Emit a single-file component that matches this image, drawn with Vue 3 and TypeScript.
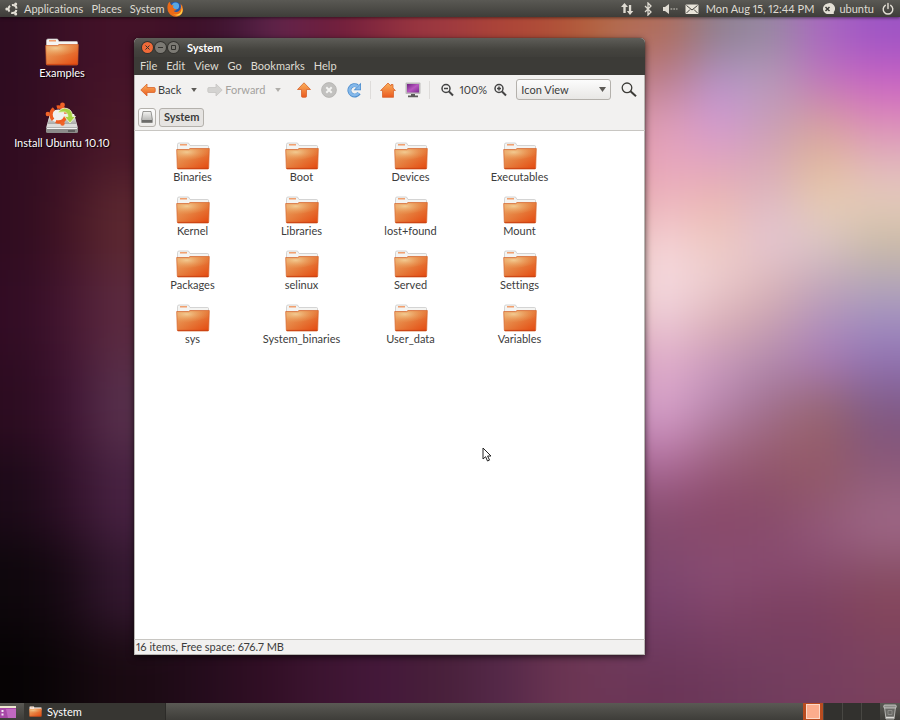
<script setup lang="ts">
import { ref } from 'vue'

interface Patch { x: number; y: number; w: number; h: number; fill: string }

const folders: string[] = [
  'Binaries', 'Boot', 'Devices', 'Executables',
  'Kernel', 'Libraries', 'lost+found', 'Mount',
  'Packages', 'selinux', 'Served', 'Settings',
  'sys', 'System_binaries', 'User_data', 'Variables',
]
const windowMenus: string[] = ['File', 'Edit', 'View', 'Go', 'Bookmarks', 'Help']
const panelMenus: string[] = ['Applications', 'Places', 'System']
const workspaces = [1, 2, 3, 4]
const view = ref('Icon View')
const activeWorkspace = ref(1)

// Wallpaper: colour patches that are blurred together into soft light.
function mesh(xs: number[], ys: number[], rows: string[]): Patch[] {
  return rows.flatMap((row, r) =>
    row.split(' ').map((hex, c) => ({
      x: xs[c], y: ys[r], w: xs[c + 1] - xs[c] + 1, h: ys[r + 1] - ys[r] + 1, fill: '#' + hex,
    })),
  )
}

const wallpaper: Patch[] = [
  ...mesh([100, 170, 220, 260, 300, 350, 400, 470, 530, 580, 640], [-90, 340], [
    '3e1028 3c1028 441838 662850 6a1c3c 84283e 9c3840 ac4438 b05038 b46840',
  ]),
  ...mesh([100, 170, 230, 290, 350, 410, 470, 530, 590, 650], [340, 810], [
    '140810 240c1c 300e24 3c1430 44183a 48203a 542848 6a3452 703a58',
  ]),
  ...mesh([-90, 45, 90, 170], [-90, 90, 180, 270, 360, 450, 540, 630, 810], [
    '2e0c20 3c1026 441228',
    '300c20 3c1024 4a1828',
    '300c20 421424 5c2830',
    '320c24 441630 5c2a40',
    '2c0c20 3c1230 58304c',
    '1c0a18 301028 482242',
    '0e070c 180914 341830',
    '060304 0e060a 1a0a12',
  ]),
  ...mesh([615, 692, 744, 796, 848, 990],
    [-90, 57, 98, 139, 180, 221, 262, 303, 344, 385, 426, 467, 508, 549, 590, 631, 672, 810], [
    'b06c58 8c7f90 9688a0 a868c0 9c54c4',
    'b87c8c b494cc b79cb8 c074bc c860c4',
    'dc9cb4 d098d4 c49cb8 d49ca0 dc88b8',
    'e8a4bc e0a4c0 d8a8b4 e0b898 e0b4bc',
    'ecb4bc ecb8b0 dcb8c4 e8ccb0 e6ccbc',
    'f4d0d4 eecac0 e6c6d4 dcc8c8 ccbca4',
    'f6dce0 ecccd0 dcb8b8 c4a8b8 b4a8b8',
    'ecc8d4 dab0b4 c8a0b0 b090bc a08cc0',
    'dfaac8 c898bc b088ac a878b4 9070b0',
    'd8a4cc b888b0 a07090 986870 805c88',
    'c080b0 a46c88 9a6074 965c68 845478',
    '985880 904f70 8c5068 905868 94607c',
    '844a6c 884868 884c6c 94587c a06888',
    '804870 8a4e74 884a70 884c6c 885068',
    '78406a 804468 7c4060 7c4060 84445a',
    '6e3a5e 743c60 764062 783e60 7c4460',
    '6a3456 6c385a 703c5c 763e5e 7a405c',
  ]),
]
</script>

<template>
  <div class="screen">
    <svg class="wallpaper" viewBox="0 0 900 720" preserveAspectRatio="none" aria-hidden="true">
      <defs>
        <filter id="soften" x="-100" y="-100" width="1100" height="920" filterUnits="userSpaceOnUse" color-interpolation-filters="sRGB">
          <feGaussianBlur stdDeviation="24" />
        </filter>
      </defs>
      <g filter="url(#soften)">
        <rect v-for="(p, i) in wallpaper" :key="i" :x="p.x" :y="p.y" :width="p.w" :height="p.h" :fill="p.fill" />
      </g>
    </svg>

    <svg class="defs" aria-hidden="true">
      <defs>
        <linearGradient id="folderFace" x1="0" y1="0" x2="1" y2="1">
          <stop offset="0" stop-color="#eca868" /><stop offset=".5" stop-color="#e67c3c" /><stop offset="1" stop-color="#e4480e" />
        </linearGradient>
        <radialGradient id="folderGlow" cx=".3" cy=".25" r=".75">
          <stop offset="0" stop-color="#f4d49c" stop-opacity=".85" /><stop offset="1" stop-color="#e89850" stop-opacity="0" />
        </radialGradient>
        <linearGradient id="orange" x1="0" y1="0" x2="0" y2="1">
          <stop offset="0" stop-color="#fbb25c" /><stop offset="1" stop-color="#ea5a20" />
        </linearGradient>
        <linearGradient id="metal" x1="0" y1="0" x2="0" y2="1">
          <stop offset="0" stop-color="#f4f4f2" /><stop offset="1" stop-color="#a8a8a6" />
        </linearGradient>
        <linearGradient id="purple" x1="0" y1="0" x2="1" y2="1">
          <stop offset="0" stop-color="#6c2080" /><stop offset=".5" stop-color="#b858c0" /><stop offset="1" stop-color="#7c2c90" />
        </linearGradient>
        <symbol id="folder" viewBox="0 0 34 28">
          <path d="M1.500 9V2.500Q1.500 1 3 1h9.500l1.500 2.500h17.500q1 0 1 1V10z" fill="#f4f4f2" stroke="#c4c4c4" stroke-width=".7" />
          <path d="M4 2.800h7" stroke="#f09058" stroke-width="1.300" />
          <path d="M.7 7.500h12l1.300-1h19.300L32.700 26q0 1-1 1H2.300q-1 0-1-1z" fill="url(#folderFace)" stroke="#d4642c" stroke-width=".7" />
          <path d="M1.400 8.200h11.600l1.300-1h18.300l-.3 6Q22 18 1.700 19z" fill="url(#folderGlow)" />
          <path d="M1.600 26.400h30.800" stroke="#c63c10" stroke-width=".8" />
        </symbol>
      </defs>
    </svg>

    <header class="panel top">
      <nav class="panel-menus" aria-label="Main menu">
        <svg class="i14" viewBox="0 0 14 14" aria-hidden="true">
          <circle cx="7.500" cy="7" r="4" fill="none" stroke="#e4e0d6" stroke-width="2" stroke-dasharray="6.400 1.980" stroke-dashoffset="-1" />
          <circle cx="1.800" cy="7" r="1.500" fill="#e4e0d6" /><circle cx="10.700" cy="1.900" r="1.500" fill="#e4e0d6" /><circle cx="10.700" cy="12.100" r="1.500" fill="#e4e0d6" />
        </svg>
        <button v-for="m in panelMenus" :key="m" type="button">{{ m }}</button>
        <button type="button" class="firefox" aria-label="Firefox">
          <svg class="i16" viewBox="0 0 16 16" aria-hidden="true">
            <circle cx="8" cy="7.700" r="7" fill="#2456a8" /><circle cx="8.500" cy="5" r="3.600" fill="#58a8e4" />
            <path d="M1 3Q-.6 8 2 12q3 4 7.500 3.700Q15 15 16 9.500 16.300 5 13.500 2.500q1.500 5-1.500 7.500-3 2-5.500-.3 2 .2 3-1.200-2.500-.2-3.800-2.500L7 4.500Q4.500 4.500 3.500 3L2.800.8Q1.500 1.500 1 3z" fill="#ea6a18" />
            <path d="M13.500 3.500q2.500 5-.5 8.500-3.500 3-7 1 5 3.500 8.500-.2Q17 8.500 13.500 3.500z" fill="#fcd048" />
          </svg>
        </button>
      </nav>
      <div class="indicators">
        <svg class="i14" viewBox="0 0 14 14" fill="#dfdbd2" aria-hidden="true">
          <path d="M4.500 1 8 5H5.700v6H3.300V5H1zM10 13 6.800 9h2.100V3h2.300v6h2.100z" />
        </svg>
        <svg class="i14" viewBox="0 0 14 14" fill="none" stroke="#dfdbd2" stroke-width="1.300" aria-hidden="true"><path d="M4 4l6 6-3 3V1l3 3-6 6" /></svg>
        <svg class="i16" viewBox="0 0 16 14" aria-hidden="true"><path d="M1 5h2l4-3v10L3 9H1z" fill="#dfdbd2" /><path d="M8.500 7h7" stroke="#a4a29a" stroke-width="1.300" stroke-dasharray="1.800 1" /></svg>
        <svg class="i14" viewBox="0 0 14 14" aria-hidden="true"><rect x=".5" y="2.500" width="13" height="9.500" rx="1" fill="#e8e4da" /><path d="M1.500 3.500 7 8l5.500-4.500M1.500 11 5 7.500M12.500 11 9 7.500" fill="none" stroke="#45443f" /></svg>
        <time datetime="2011-08-15T12:44">Mon Aug 15, 12:44 PM</time>
        <button type="button" class="user">
          <svg class="i14" viewBox="0 0 14 14" aria-hidden="true"><path d="M6.500 1.500a5.500 5.300 0 1 0 2 10.500H12.800v-2a5.500 5.500 0 0 0-6.300-8.500z" fill="#e4e0d6" /><path d="M4.500 5l4 4M8.500 5l-4 4" stroke="#3c3b37" stroke-width="1.500" /></svg>
          ubuntu
        </button>
        <button type="button" aria-label="Shut down">
          <svg class="i14" viewBox="0 0 14 14" fill="none" stroke="#e4e0d6" stroke-width="1.400" stroke-linecap="round" aria-hidden="true"><path d="M4.300 3.300a4.800 4.800 0 1 0 5.400 0M7 1.500v5" /></svg>
        </button>
      </div>
    </header>

    <main class="desktop">
      <div class="shortcuts">
        <button type="button" class="shortcut">
          <svg class="folder" aria-hidden="true"><use href="#folder" /></svg>
          <span>Examples</span>
        </button>
        <button type="button" class="shortcut">
          <svg class="installer" viewBox="0 0 34 32" aria-hidden="true">
            <path d="M5 12h24l4 14H1z" fill="#dcdcda" /><path d="M5 12h24l2.500 10H2.500z" fill="url(#metal)" />
            <path d="M1 25.500h32v4q0 1.500-1.500 1.500h-29Q1 31 1 29.500z" fill="#8c8c8a" /><path d="M2 26h30v1H2z" fill="#f4f4f4" /><path d="M23 29h7" stroke="#505050" stroke-width="1.500" />
            <ellipse cx="13.500" cy="14" rx="8.500" ry="6.500" fill="#f0f0ee" />
            <circle cx="13.500" cy="12.500" r="7.500" fill="none" stroke="#ee5c20" stroke-width="3.400" stroke-dasharray="12.500 3.200" stroke-dashoffset="-2" />
            <circle cx="2.800" cy="12" r="2.200" fill="#f06428" /><circle cx="17.500" cy="3" r="2.400" fill="#f06428" /><circle cx="17.500" cy="21.500" r="2.200" fill="#f06428" />
            <path d="M13 10.500Q16.500 5 22 6.500q5.500 1.500 5.500 8h3l-5.500 6.500-5.500-6.500H23q-.5-4.500-4-4.500-3 0-6 .5z" fill="#a8d444" stroke="#f4f8d8" stroke-width=".8" />
          </svg>
          <span>Install Ubuntu 10.10</span>
        </button>
      </div>

      <section class="window" aria-label="System">
        <div class="titlebar">
          <button type="button" class="wm close" aria-label="Close"><svg viewBox="0 0 11 11" aria-hidden="true"><path d="M3.500 3.500l4 4M7.500 3.500l-4 4" /></svg></button>
          <button type="button" class="wm" aria-label="Minimize"><svg viewBox="0 0 11 11" aria-hidden="true"><path d="M3 5.500h5" /></svg></button>
          <button type="button" class="wm" aria-label="Maximize"><svg viewBox="0 0 11 11" aria-hidden="true"><path d="M3.500 3.500h4v4h-4z" /></svg></button>
          <h1>System</h1>
        </div>
        <nav class="menubar" aria-label="Window menu">
          <button v-for="m in windowMenus" :key="m" type="button">{{ m }}</button>
        </nav>

        <div class="toolbar">
          <button type="button" class="nav">
            <svg class="i16" viewBox="0 0 16 16" aria-hidden="true"><path d="M.8 8 7 2v3.500h7q1.200 0 1.200 1.200v2.600q0 1.200-1.200 1.200H7V14z" fill="url(#orange)" stroke="#d8642c" stroke-width=".8" /></svg>
            Back
          </button>
          <button type="button" class="caret" aria-label="Back history"><svg viewBox="0 0 7 5" aria-hidden="true"><path d="M0 0h7L3.500 5z" fill="#5c5a56" /></svg></button>
          <button type="button" class="nav" disabled>
            <svg class="i16" viewBox="0 0 16 16" aria-hidden="true"><path d="M15.200 8 9 2v3.500H2Q.8 5.500.8 6.700v2.600q0 1.200 1.200 1.200h7V14z" fill="#d4d3d1" stroke="#c6c5c3" stroke-width=".8" /></svg>
            Forward
          </button>
          <button type="button" class="caret" aria-label="Forward history" disabled><svg viewBox="0 0 7 5" aria-hidden="true"><path d="M0 0h7L3.500 5z" fill="#b0aeaa" /></svg></button>
          <button type="button" class="tool" aria-label="Up"><svg class="i16" viewBox="0 0 16 16" aria-hidden="true"><path d="M8 .8 14.500 7.500h-4v6.800q0 1-1 1h-3q-1 0-1-1V7.500h-4z" fill="url(#orange)" stroke="#d8642c" stroke-width=".8" /></svg></button>
          <button type="button" class="tool" aria-label="Stop" disabled><svg class="i16" viewBox="0 0 16 16" aria-hidden="true"><circle cx="8" cy="8" r="7.400" fill="#c2c1bf" stroke="#b2b1af" stroke-width=".8" /><path d="M5.300 5.300l5.400 5.400M10.700 5.300l-5.400 5.400" stroke="#f4f4f2" stroke-width="2" /></svg></button>
          <button type="button" class="tool" aria-label="Reload"><svg class="i16" viewBox="0 0 16 16" aria-hidden="true"><path d="M13 11.200A5.200 5.200 0 1 1 11.500 4" fill="none" stroke="#4c8ccc" stroke-width="4" /><path d="M15 .8v7.400H7.600z" fill="#4c8ccc" /><path d="M12.500 11A4.900 4.900 0 1 1 11.500 4.400" fill="none" stroke="#84b8ea" stroke-width="2.600" /><path d="M14.300 2.500v5H9.300z" fill="#84b8ea" /></svg></button>
          <span class="sep"></span>
          <button type="button" class="tool" aria-label="Home"><svg class="i16" viewBox="0 0 16 16" aria-hidden="true"><path d="M8 1 .6 8.500h1.900v6.800h11V8.500h1.900L13 6V2.500h-2V4z" fill="url(#orange)" stroke="#d8642c" stroke-width=".8" /></svg></button>
          <button type="button" class="tool" aria-label="Computer"><svg class="i16" viewBox="0 0 16 16" aria-hidden="true"><rect x=".5" y=".5" width="15" height="11.500" rx="1" fill="#bcbcba" /><rect x="2" y="2" width="12" height="8.500" fill="url(#purple)" /><path d="M6 12h4v1.500h3V15.300H3v-1.800h3z" fill="#5c5c5a" /></svg></button>
          <span class="sep"></span>
          <button type="button" class="tool" aria-label="Zoom out"><svg class="i14" viewBox="0 0 14 14" fill="none" stroke="#444" stroke-width="1.500" aria-hidden="true"><circle cx="6" cy="5.500" r="4" /><path d="M4 5.500h4" /><path d="M9 8.500l4 4" stroke-width="2" /></svg></button>
          <span class="zoom">100%</span>
          <button type="button" class="tool" aria-label="Zoom in"><svg class="i14" viewBox="0 0 14 14" fill="none" stroke="#444" stroke-width="1.500" aria-hidden="true"><circle cx="6" cy="5.500" r="4" /><path d="M4 5.500h4M6 3.500v4" /><path d="M9 8.500l4 4" stroke-width="2" /></svg></button>
          <div class="combo">
            <select v-model="view" aria-label="View mode">
              <option>Icon View</option>
              <option>List View</option>
              <option>Compact View</option>
            </select>
            <svg viewBox="0 0 7 5" aria-hidden="true"><path d="M0 0h7L3.500 5z" fill="#5c5a56" /></svg>
          </div>
          <button type="button" class="tool" aria-label="Search"><svg class="i16" viewBox="0 0 16 16" fill="none" stroke="#3c3b37" aria-hidden="true"><circle cx="6" cy="5.800" r="4.800" stroke-width="1.300" /><path d="M9.500 9.300l5.500 5" stroke-width="2" /></svg></button>
        </div>

        <nav class="pathbar" aria-label="Location">
          <button type="button" class="crumb drive" aria-label="File system"><svg class="i14" viewBox="0 0 14 14" aria-hidden="true"><path d="M3 1.500h8L12.300 9v3.500H1.700V9z" fill="url(#metal)" stroke="#80807e" stroke-width=".8" /><path d="M2 10h10v2.300H2z" fill="#6c6c6a" /></svg></button>
          <button type="button" class="crumb" aria-current="page">System</button>
        </nav>

        <div class="files">
          <button v-for="name in folders" :key="name" type="button" class="file">
            <svg class="folder" aria-hidden="true"><use href="#folder" /></svg>
            <span>{{ name }}</span>
          </button>
          <svg class="pointer" viewBox="0 0 10 15" aria-hidden="true"><path d="M1 1v11l2.600-2.300L5.500 14l2-.9-1.900-4.100H9z" fill="#fff" stroke="#222" /></svg>
        </div>
        <footer class="status">16 items, Free space: 676.7 MB</footer>
      </section>
    </main>

    <footer class="panel bottom">
      <button type="button" class="show-desktop" aria-label="Show desktop">
        <svg class="i16" viewBox="0 0 16 14" aria-hidden="true"><path d="M0 1h16v12H0z" fill="#a848a8" /><path d="M6 4h10v9H8z" fill="#c068c0" /><path d="M0 1h16v2H0z" fill="#ece8d0" /><path d="M1.500 5h2v2h-2zM1.500 8.500h2v2h-2z" fill="#f4e8f4" /></svg>
      </button>
      <button type="button" class="task"><svg class="mini" aria-hidden="true"><use href="#folder" /></svg>System</button>
      <div class="workspaces">
        <button v-for="n in workspaces" :key="n" type="button" :class="{ active: n === activeWorkspace }" :aria-label="'Workspace ' + n" @click="activeWorkspace = n"></button>
      </div>
      <button type="button" class="trash" aria-label="Trash">
        <svg class="i16" viewBox="0 0 16 16" aria-hidden="true"><path d="M2.500 3h11l-1.500 12H4z" fill="#686864" stroke="#b4b4b0" /><rect x="1.800" y="1" width="12.400" height="3" rx="1" fill="#8c8c88" stroke="#d4d4d0" stroke-width=".8" /><path d="M4 13.500h8" stroke="#dcdcd8" stroke-width="1.500" /><path d="M6 6.500h4v4H6z" fill="none" stroke="#8c8c88" /></svg>
      </button>
    </footer>
  </div>
</template>

<style>
body { margin: 0; background: #2c0c20; }
</style>

<style scoped>
.screen {
  position: relative;
  isolation: isolate;
  display: flex;
  flex-direction: column;
  min-height: 100vh;
  overflow: hidden;
  font: 11px/14px Lato, 'Open Sans', sans-serif;
  font-variant-ligatures: none;
  font-variant-numeric: proportional-nums;
  color: #3c3c3c;
}
.wallpaper { position: absolute; inset: 0; width: 100%; height: 100%; z-index: -1; }
.defs { position: absolute; width: 0; height: 0; }
button {
  display: flex;
  align-items: center;
  justify-content: center;
  margin: 0;
  padding: 0;
  border: 0;
  background: none;
  color: inherit;
  font: inherit;
  font-variant-ligatures: inherit;
  font-variant-numeric: inherit;
  white-space: nowrap;
}
svg { display: block; flex: none; }
.i14 { width: 14px; height: 14px; }
.i16 { width: 16px; height: 16px; }

.panel {
  display: flex;
  align-items: center;
  height: 17px;
  background: linear-gradient(#5a5954, #3e3d39);
  color: #dfdbd2;
}
.top { justify-content: space-between; padding: 0 5px; box-shadow: 0 1px 3px rgba(0, 0, 0, .5); }
.panel-menus { display: flex; align-items: center; gap: 8px; }
.panel-menus .i14 { margin-right: -3px; }
.panel-menus .firefox { margin-left: -6px; }
.indicators { display: flex; align-items: center; gap: 7px; }
.user { gap: 4px; }

.desktop {
  flex: 1;
  display: grid;
  grid-template-columns: 134px minmax(0, 2fr) minmax(0, 1fr);
  padding: 21px 0 48px;
}
.shortcuts { display: flex; flex-direction: column; gap: 22px; padding-right: 10px; }
.shortcut { flex-direction: column; color: #fff; text-shadow: 1px 1px 1px #000; }
.folder { width: 34px; height: 28px; }
.installer { width: 34px; height: 32px; margin-bottom: 2px; }

.window {
  display: flex;
  flex-direction: column;
  border-radius: 5px 5px 0 0;
  background: #f2f1f0;
  box-shadow: inset 0 0 0 1px #b8b6b2, 0 0 1px #222, 0 2px 7px rgba(0, 0, 0, .65);
}
.titlebar {
  display: flex;
  align-items: center;
  gap: 2px;
  height: 19px;
  padding: 0 8px;
  border-radius: 5px 5px 0 0;
  background: linear-gradient(#5e5d58, #45443f 60%, #3f3e3a);
  color: #fff;
}
h1 { margin: 0 0 0 6px; font: inherit; font-weight: 700; }
.wm { width: 11px; height: 11px; border-radius: 50%; background: #7c7a74; box-shadow: 0 0 0 1px #33322e; }
.wm svg { width: 11px; height: 11px; fill: none; stroke: #33322e; }
.wm.close { background: #f06a38; }
.menubar {
  display: flex;
  align-items: center;
  gap: 9px;
  height: 18px;
  padding: 0 6px;
  background: #3c3b37;
  color: #dfdbd2;
}
.toolbar { display: flex; align-items: center; height: 29px; padding: 0 3px 0 6px; }
.nav { gap: 2px; }
.nav:disabled { color: #a4a29e; }
.caret { width: 26px; height: 22px; }
.caret svg { width: 6px; height: 4px; }
.combo svg { width: 7px; height: 5px; }
.tool { width: 25px; height: 24px; }
.sep { width: 1px; height: 18px; margin: 0 4px; background: #dedcda; }
.zoom { width: 28px; text-align: center; }
.combo { display: grid; align-items: center; width: 95px; margin: 0 auto 0 4px; }
.combo select {
  grid-area: 1 / 1;
  appearance: none;
  width: 100%;
  height: 21px;
  padding: 0 16px 0 4px;
  border: 1px solid #b4b1ac;
  border-radius: 3px;
  background: linear-gradient(#fcfcfc, #e8e7e5);
  color: inherit;
  font: inherit;
}
.combo svg { grid-area: 1 / 1; justify-self: end; margin-right: 5px; pointer-events: none; }
.pathbar { display: flex; align-items: center; gap: 3px; height: 26px; padding: 0 4px; border-bottom: 1px solid #c8c6c2; }
.crumb {
  height: 19px;
  padding: 0 4px;
  border: 1px solid #b4b1ac;
  border-radius: 3px;
  background: #e6e4e2;
  font-weight: 700;
}
.drive { padding: 0 1px; background: linear-gradient(#fcfcfc, #eceae8); }
.files {
  position: relative;
  flex: 1;
  display: grid;
  grid-template-columns: repeat(auto-fill, 109px);
  grid-auto-rows: 54px;
  align-content: start;
  margin: 0 1px;
  padding: 11px 3px;
  background: #fff;
}
.file { flex-direction: column; justify-content: flex-start; }
.pointer { position: absolute; left: 347px; top: 316px; width: 10px; height: 15px; }
.status { padding: 0 2px 1px; border-top: 1px solid #c8c6c2; }

.show-desktop { margin-right: 8px; }
.task { gap: 5px; width: 142px; height: 17px; justify-content: flex-start; padding-left: 5px; box-sizing: border-box; background: #373632; border-right: 1px solid #2c2b28; color: #fff; }
.mini { width: 13px; height: 11px; }
.workspaces { display: flex; gap: 1px; height: 17px; margin-left: auto; background: #484743; }
.workspaces button { width: 18px; background: #32312e; }
.workspaces .active { width: 20px; border: 1px solid #b84c20; border-width: 1px 3px; background: #fcac8c; box-shadow: inset 0 0 0 1px #fcd8c8; }
.trash { margin: 0 2px; }
</style>
